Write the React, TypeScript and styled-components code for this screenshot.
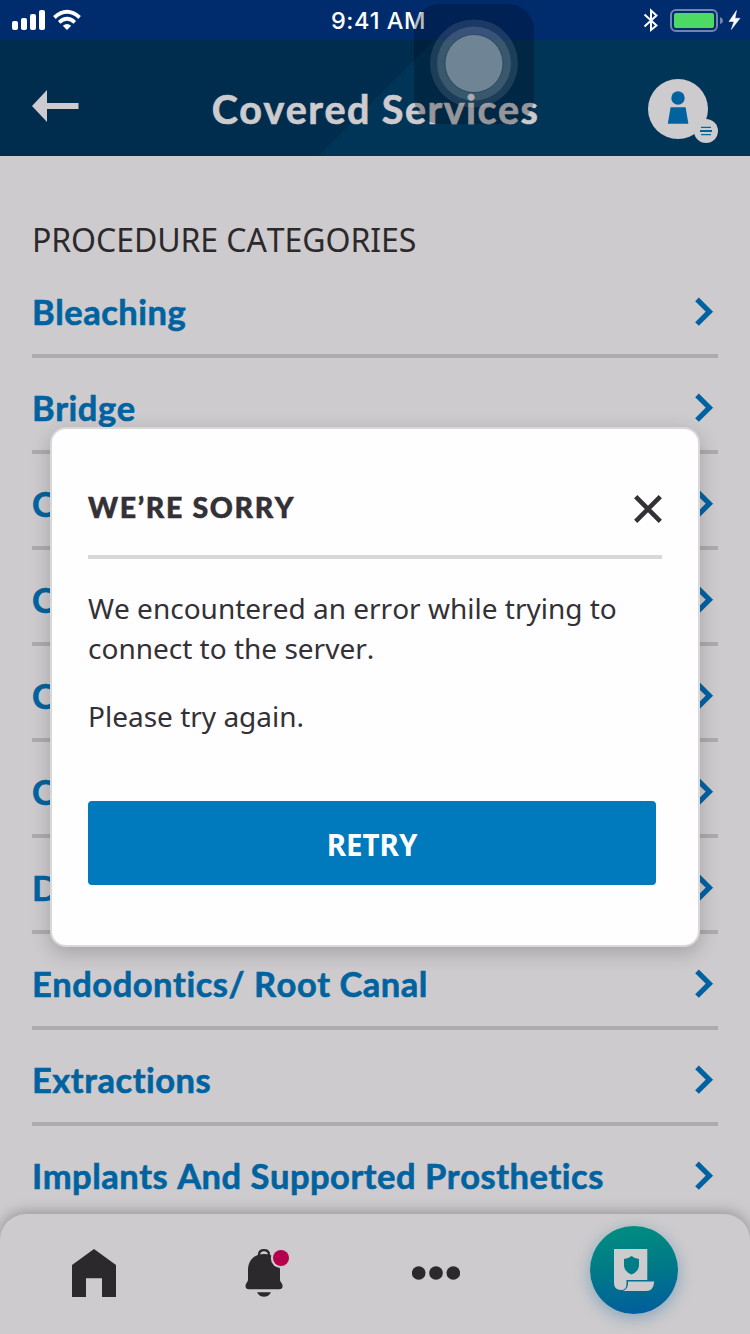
import React from "react";
import styled, { createGlobalStyle } from "styled-components";

const GlobalStyle = createGlobalStyle`
  *, *::before, *::after { box-sizing: border-box; }
  body { margin: 0; background: #cdcbcd; }
  svg { display: block; flex: none; }
`;

const geometric = `"Lato", "Inter", sans-serif`;
const humanist = `"Noto Sans", "Open Sans", sans-serif`;

const Screen = styled.div`
  position: relative;
  width: 750px;
  height: 1334px;
  display: flex;
  flex-direction: column;
  overflow: hidden;
  background: #cdcbcd;
  font-family: ${geometric};
  font-kerning: none;
`;

const StatusBar = styled.div`
  flex: none;
  height: 40px;
  padding: 0 9px 0 12px;
  display: grid;
  grid-template-columns: 1fr auto 1fr;
  align-items: center;
  background: #002c6d;
  color: #fff;
`;

const StatusGroup = styled.div<{ $end?: boolean }>`
  display: flex;
  align-items: center;
  justify-content: ${(p) => (p.$end ? "flex-end" : "flex-start")};
`;

const Clock = styled.span`
  padding: 2px 0 0 4px;
  font-family: "Inter", sans-serif;
  font-size: 23.5px;
  font-weight: 500;
  line-height: 38px;
  letter-spacing: 0.5px;
  white-space: nowrap;
`;

const Header = styled.header`
  flex: none;
  height: 116px;
  padding: 0 32px;
  display: grid;
  grid-template-columns: 76px 1fr 76px;
  align-items: center;
  background: linear-gradient(135deg, #002d4d 307px, #003557 307.5px);
`;

const IconButton = styled.button`
  padding: 0;
  border: 0;
  background: none;
  display: flex;
`;

const BackButton = styled(IconButton)`
  padding-top: 16px;
`;

const ProfileButton = styled(IconButton)`
  justify-content: flex-end;
  padding-top: 26px;
`;

const Title = styled.h1`
  margin: 0;
  padding: 22px 0 0 1px;
  color: #cdcbcd;
  font-size: 39.5px;
  line-height: 48px;
  font-weight: 700;
  letter-spacing: 1.45px;
  -webkit-text-stroke: 0.7px currentColor;
  text-align: center;
  white-space: nowrap;
`;

const Content = styled.main`
  flex: 1;
  min-height: 0;
  overflow: hidden;
  padding: 62px 32px 0;
`;

const Caption = styled.h2`
  margin: 0;
  color: #2b292c;
  font-family: ${humanist};
  font-size: 32px;
  line-height: 44px;
  font-weight: 400;
  letter-spacing: -0.07px;
`;

const Row = styled.div`
  height: 96px;
  padding: 7px 3px 0 0;
  display: flex;
  align-items: center;
  justify-content: space-between;
  border-bottom: 4px solid #adabab;
  color: #0063a0;
`;

const RowLabel = styled.span`
  font-size: 34.5px;
  line-height: 44px;
  font-weight: 700;
  letter-spacing: 0.5px;
  -webkit-text-stroke: 0.6px currentColor;
  white-space: nowrap;
`;

const NavBar = styled.nav`
  position: relative;
  flex: none;
  height: 120px;
  padding-right: 14px;
  display: grid;
  grid-template-columns: 188px 152px 192px 204px;
  justify-items: center;
  border-radius: 26px 26px 0 0;
  background: #cdcbcd;
  box-shadow: 0 -2px 14px rgba(0, 0, 0, 0.28);
`;

const NavItem = styled(IconButton)<{ $top: number }>`
  align-self: start;
  padding-top: ${(p) => p.$top}px;
`;

const PlanButton = styled.button`
  width: 88px;
  height: 88px;
  margin-top: 12px;
  padding: 0;
  border: 0;
  border-radius: 50%;
  display: grid;
  place-items: center;
  background: linear-gradient(172deg, #005f9c 0%, #005f9c 0%, #008f80 0%, #007b86 45%, #005f9c 92%);
  box-shadow: 0 4px 16px rgba(0, 99, 160, 0.36);
`;

const Overlay = styled.div`
  position: absolute;
  inset: 0;
  padding-top: 427px;
  display: flex;
  align-items: flex-start;
  justify-content: center;
`;

const Dialog = styled.section`
  width: 650px;
  height: 520px;
  padding: 0 36px;
  border: 2px solid #d9d8d8;
  border-radius: 16px;
  background: #fefdff;
  box-shadow: 0 6px 20px rgba(0, 0, 0, 0.2);
  color: #333135;
`;

const DialogHeader = styled.div`
  height: 130px;
  padding-top: 30px;
  display: flex;
  align-items: center;
  justify-content: space-between;
  border-bottom: 4px solid #d9d8d8;
`;

const DialogTitle = styled.h2`
  margin: 0;
  font-size: 28.5px;
  line-height: 40px;
  font-weight: 900;
  letter-spacing: 1.65px;
  -webkit-text-stroke: 0.5px currentColor;
`;

const CloseButton = styled(IconButton)`
  padding-top: 4px;
`;

const Message = styled.div`
  padding-top: 29px;
  font-family: ${humanist};
  font-size: 28px;
  line-height: 40px;

  p { margin: 0 0 28px; }
`;

const RetryButton = styled.button`
  display: block;
  width: 568px;
  height: 84px;
  margin-top: 65px;
  padding: 3px 0 0;
  border: 0;
  border-radius: 4px;
  background: #007abc;
  color: #fefdff;
  font-family: ${humanist};
  font-size: 29.5px;
  line-height: 40px;
  font-weight: 700;
`;

const TouchPad = styled.div`
  position: absolute;
  left: 414px;
  top: 4px;
  width: 120px;
  height: 120px;
  border-radius: 26px;
  display: grid;
  place-items: center;
  background: rgba(0, 5, 20, 0.27);
`;

const categories = [
  "Bleaching",
  "Bridge",
  "Cleaning",
  "Consultation",
  "Crown",
  "Crown Repair",
  "Dentures",
  "Endodontics/ Root Canal",
  "Extractions",
  "Implants And Supported Prosthetics",
];

const Signal = () => (
  <svg width="70" height="22" viewBox="0 0 70 22" fill="#fff">
    <rect x="0" y="12" width="6" height="9" rx="2" />
    <rect x="9" y="9" width="6" height="12" rx="2" />
    <rect x="18" y="5" width="6" height="16" rx="2" />
    <rect x="27" y="1" width="6" height="20" rx="2" />
    <path d="M55 21 L50.8 16.8 Q55 13.2 59.2 16.8 Z" />
    <g fill="none" stroke="#fff" strokeWidth="3.8">
      <path d="M47.2 13.3 Q55 6.4 62.8 13.3" />
      <path d="M42.4 8.5 Q55 -2.8 67.6 8.5" />
    </g>
  </svg>
);

const Power = () => (
  <svg width="98" height="26" viewBox="0 0 98 26">
    <path d="M1.5 7.5 L13.5 18.5 L8 23 V3.5 L13.5 8.5 L1.5 19.5" fill="none" stroke="#fff" strokeWidth="2" />
    <rect x="28" y="3" width="46" height="21" rx="5" fill="none" stroke="#7185ae" strokeWidth="2" />
    <rect x="31" y="6" width="40" height="15" rx="2" fill="#4cd964" />
    <path d="M77 10 Q80 11.2 80 13.5 Q80 16 77 17 Z" fill="#7185ae" />
    <path d="M93.5 3.5 L86 14.5 H91 L88.3 22.5 L97 11.3 H92 Z" fill="#fff" stroke="#fff" strokeWidth="0.5" />
  </svg>
);

const BackArrow = () => (
  <svg width="47" height="33" viewBox="0 0 47 33" fill="#cdcbcd">
    <path d="M0 16 L15 0 V13 H46.5 V19 H15 V32 Z" />
  </svg>
);

const Profile = () => (
  <svg width="70" height="64" viewBox="0 0 70 64">
    <circle cx="30" cy="30" r="30" fill="#cdcbcd" />
    <circle cx="30" cy="19" r="6.7" fill="#0063a0" />
    <path d="M22.6 28.2 H37.6 L40.4 44.7 H19.8 Z" fill="#0063a0" />
    <circle cx="58" cy="52" r="12" fill="#cdcbcd" />
    <path d="M53 48.3 H63 M53 55.6 H63" stroke="#006b9c" strokeWidth="1.2" />
    <path d="M52 52 H64" stroke="#0063a0" strokeWidth="2" />
  </svg>
);

const Chevron = () => (
  <svg width="20" height="30" viewBox="0 0 20 30" fill="none" stroke="#0063a0" strokeWidth="5.2">
    <path d="M2 2.4 L14.4 14.7 L2 27" />
  </svg>
);

const Home = () => (
  <svg width="44" height="48" viewBox="0 0 44 48" fill="#2b292c">
    <path d="M22 0 L44 16 V48 H30 V29.3 H14 V48 H0 V16 Z" />
  </svg>
);

const Bell = () => (
  <svg width="38" height="48" viewBox="0 0 38 48" overflow="visible" fill="#2b292c">
    <path d="M14 7 V6 Q14 1.2 19 1.2 Q24 1.2 24 6 V7" fill="none" stroke="#2b292c" strokeWidth="2.3" />
    <path d="M19 5 C8.5 5 3 12 3 21 V31 C3 33 0.5 34 0.5 37 Q0.5 40.3 4 40.3 H34 Q37.6 40.3 37.6 37 C37.6 34 35 33 35 31 V21 C35 12 29.5 5 19 5 Z" />
    <path d="M12 43.3 H26 Q23.5 47.8 19 47.8 Q14.5 47.8 12 43.3 Z" />
    <circle cx="36" cy="9" r="10.2" fill="#cdcbcd" />
    <circle cx="36" cy="9" r="8" fill="#b5004b" />
  </svg>
);

const More = () => (
  <svg width="48" height="14" viewBox="0 0 48 14" fill="#2b292c">
    <circle cx="6.7" cy="7" r="6.8" />
    <circle cx="24" cy="7" r="6.8" />
    <circle cx="41.3" cy="7" r="6.8" />
  </svg>
);

const Plan = () => (
  <svg width="41" height="43" viewBox="0 0 41 43" fill="#cdcbcd">
    <path d="M0 0 H33.3 V31 H12.5 V35 Q12.5 41 7 41 Q0 41 0 34 Z" />
    <path d="M14 32.5 H40.3 Q39.5 42 32 42 H9 Q14 40 14 34.5 Z" />
    <path d="M17.5 7 Q20.5 9.5 25 10 V16 Q25 22.5 17.5 25.5 Q10 22.5 10 16 V10 Q14.5 9.5 17.5 7 Z" fill="#007d86" />
  </svg>
);

const Close = () => (
  <svg width="28" height="28" viewBox="0 0 28 28" stroke="#333135" strokeWidth="4.6">
    <path d="M1.7 1.7 L26.3 26.3 M26.3 1.7 L1.7 26.3" />
  </svg>
);

const TouchRings = () => (
  <svg width="90" height="90" viewBox="0 0 90 90">
    <circle cx="45" cy="44.5" r="44" fill="#fff" fillOpacity="0.11" />
    <circle cx="45" cy="44.5" r="37" fill="#fff" fillOpacity="0.13" />
    <circle cx="45" cy="44.5" r="29" fill="#8496a5" fillOpacity="0.72" stroke="#1c3d57" strokeOpacity="0.7" strokeWidth="1" />
  </svg>
);

export default function App() {
  return (
    <Screen>
      <GlobalStyle />
      <StatusBar>
        <StatusGroup><Signal /></StatusGroup>
        <Clock>9:41 AM</Clock>
        <StatusGroup $end><Power /></StatusGroup>
      </StatusBar>
      <Header>
        <BackButton aria-label="Back"><BackArrow /></BackButton>
        <Title>Covered Services</Title>
        <ProfileButton aria-label="Profile"><Profile /></ProfileButton>
      </Header>
      <Content>
        <Caption>PROCEDURE CATEGORIES</Caption>
        {categories.map((name) => (
          <Row key={name}>
            <RowLabel>{name}</RowLabel>
            <Chevron />
          </Row>
        ))}
      </Content>
      <NavBar>
        <NavItem $top={35} aria-label="Home"><Home /></NavItem>
        <NavItem $top={35} aria-label="Notifications"><Bell /></NavItem>
        <NavItem $top={52} aria-label="More"><More /></NavItem>
        <PlanButton aria-label="Plan"><Plan /></PlanButton>
      </NavBar>
      <Overlay>
        <Dialog>
          <DialogHeader>
            <DialogTitle>WE’RE SORRY</DialogTitle>
            <CloseButton aria-label="Close"><Close /></CloseButton>
          </DialogHeader>
          <Message>
            <p>We encountered an error while trying to connect to the server.</p>
            <p>Please try again.</p>
          </Message>
          <RetryButton>RETRY</RetryButton>
        </Dialog>
      </Overlay>
      <TouchPad><TouchRings /></TouchPad>
    </Screen>
  );
}
